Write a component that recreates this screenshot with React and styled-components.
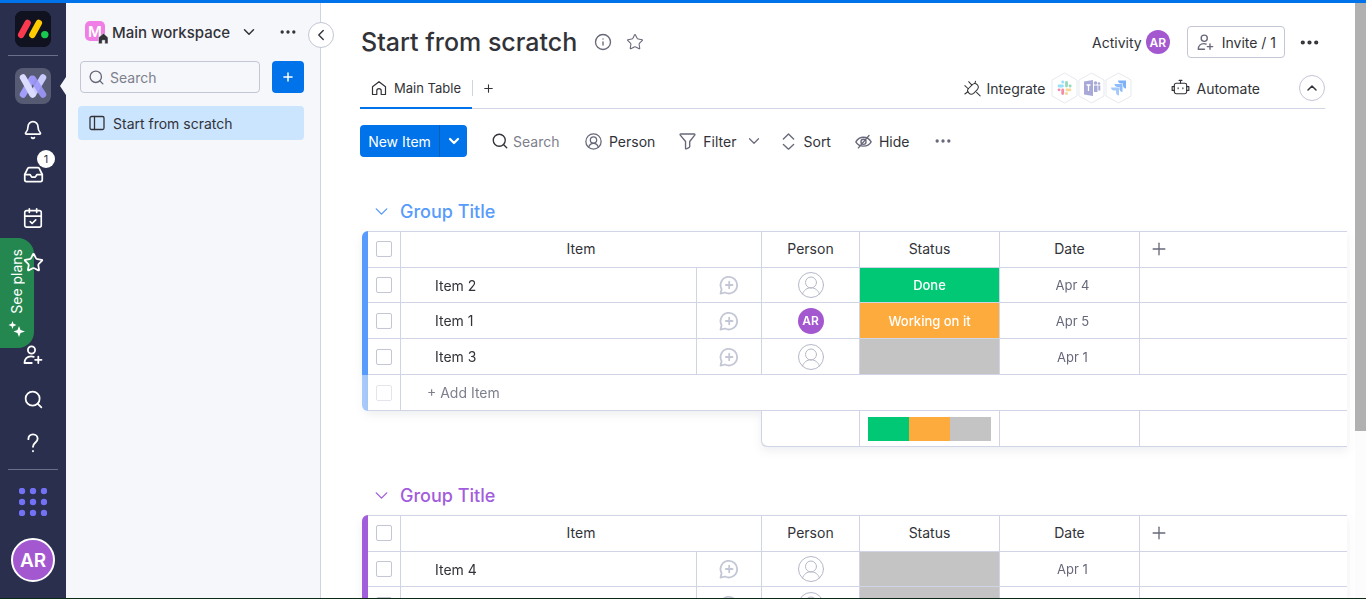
import React from 'react';
import styled, { createGlobalStyle, css } from 'styled-components';
import {
    Bell, CalendarCheck, ChevronDown, ChevronLeft, ChevronUp, Ellipsis,
    Inbox, Info, Plus, Search, Star
} from 'lucide-react';

const GlobalStyle = createGlobalStyle`
    * {
        box-sizing: border-box;
    }
    body {
        margin: 0;
        background-color: #fff;
        color: #323338;
        font-family: 'Inter', 'Liberation Sans', sans-serif;
        font-size: 14px;
    }
    button, input {
        font: inherit;
        color: inherit;
    }
    svg {
        display: block;
        flex-shrink: 0;
    }
`;

const Page = styled.div`
    display: flex;
    height: 100vh;
    overflow: hidden;
    border-top: 3px solid #0073ea;
    border-bottom: 1px solid #0c2a16;
`;

const PlainButton = styled.button`
    display: flex;
    align-items: center;
    justify-content: center;
    padding: 0;
    border: none;
    background: none;
    cursor: pointer;
`;

/* ---- left rail ---- */

const Rail = styled.nav`
    position: relative;
    display: flex;
    flex-direction: column;
    justify-content: space-between;
    flex: 0 0 66px;
    padding: 8px 0 16px;
    background-color: #292f4c;
    color: #fff;
`;

const RailGroup = styled.div`
    display: flex;
    flex-direction: column;
    align-items: center;
`;

const RailTile = styled(PlainButton)`
    width: 36px;
    height: 36px;
    border-radius: 8px;
    background-color: ${props => props.$color};
`;

const RailDivider = styled.hr`
    width: 50px;
    height: 1px;
    margin: ${props => props.$margin};
    border: none;
    background-color: #6b6f87;
`;

const RailButton = styled(PlainButton)`
    position: relative;
    z-index: 1;
    width: 44px;
    height: 44px;
`;

const RailIcons = styled.div`
    margin-top: 4px;
`;

const Badge = styled.span`
    position: absolute;
    top: -2px;
    right: 0;
    width: 18px;
    height: 18px;
    border-radius: 50%;
    background-color: #fff;
    color: #323338;
    font-size: 11px;
    line-height: 18px;
    text-align: center;
`;

const Notch = styled.span`
    position: absolute;
    top: 74px;
    right: 0;
    border: solid transparent;
    border-width: 9px 6px 9px 0;
    border-right-color: #f6f7fb;
`;

const SeePlans = styled(PlainButton)`
    position: absolute;
    left: 0;
    top: 235px;
    flex-direction: column;
    gap: 8px;
    width: 34px;
    height: 110px;
    border-radius: 0 16px 16px 0;
    background-color: #258750;
    color: #fff;
`;

const SeePlansText = styled.span`
    writing-mode: vertical-rl;
    transform: rotate(180deg);
    line-height: 18px;
`;

const Avatar = styled.span`
    display: inline-flex;
    align-items: center;
    justify-content: center;
    width: ${props => props.$size}px;
    height: ${props => props.$size}px;
    border-radius: 50%;
    background-color: #a358d0;
    color: #fff;
    font-size: ${props => props.$font || 12}px;
    font-weight: 600;
    ${props => props.$ring && css`
        border: 2px solid #fff;
    `}
`;

const AppsButton = styled(PlainButton)`
    margin-bottom: 22px;
`;

/* ---- workspace panel ---- */

const Panel = styled.aside`
    position: relative;
    flex: 0 0 255px;
    padding: 13px 16px 0 12px;
    border-right: 1px solid #d0d4e4;
    background-color: #f6f7fb;
`;

const PanelHeader = styled.div`
    display: flex;
    align-items: center;
    height: 32px;
    padding-left: 7px;
`;

const WorkspaceButton = styled(PlainButton)`
    flex: 1;
    gap: 4px;
    justify-content: flex-start;
    font-size: 15px;
    font-weight: 500;

    & > :last-child {
        margin-left: 6px;
    }
`;

const PanelMenu = styled(PlainButton)`
    width: 32px;
    height: 32px;
`;

const SearchRow = styled.div`
    display: flex;
    gap: 12px;
    margin: 13px 0 13px 2px;
`;

const SearchBox = styled.label`
    display: flex;
    flex: 1;
    align-items: center;
    gap: 5px;
    height: 32px;
    padding: 0 7px;
    border: 1px solid #c3c6d4;
    border-radius: 4px;
    color: #676879;
`;

const TextInput = styled.input`
    width: ${props => props.$width || '100%'};
    min-width: 0;
    padding: 0;
    border: none;
    outline: none;
    background: none;

    &::placeholder {
        color: #7d7f8c;
        opacity: 1;
    }
`;

const AddButton = styled(PlainButton)`
    width: 32px;
    height: 32px;
    border-radius: 4px;
    background-color: #0073ea;
    color: #fff;
`;

const BoardLink = styled.a`
    display: flex;
    align-items: center;
    gap: 8px;
    height: 34px;
    padding: 0 11px;
    border-radius: 4px;
    background-color: #cce5ff;
    color: #323338;
    text-decoration: none;
`;

const CollapseButton = styled(PlainButton)`
    position: absolute;
    top: 19px;
    right: -14px;
    width: 26px;
    height: 26px;
    border: 1px solid #c3c6d4;
    border-radius: 50%;
    background-color: #fff;
`;

/* ---- board ---- */

const Board = styled.main`
    flex: 1;
    min-width: 0;
    padding: 23px 8px 0 39px;
    overflow: hidden;
`;

const BoardHeader = styled.header`
    display: flex;
    align-items: center;
    height: 32px;
    margin-right: 22px;
`;

const Title = styled.h1`
    margin: 0 17px 0 1px;
    font-size: 25px;
    font-weight: 500;
    line-height: 32px;
`;

const TitleIcon = styled(PlainButton)`
    margin-right: 14px;
    color: #676879;
`;

const HeaderActions = styled.div`
    display: flex;
    align-items: center;
    gap: 8px;
    margin-left: auto;
`;

const ActivityButton = styled(PlainButton)`
    gap: 4px;
    margin-right: 9px;
`;

const InviteButton = styled(PlainButton)`
    gap: 8px;
    height: 32px;
    padding: 0 8px 0 9px;
    border: 1px solid #c3c6d4;
    border-radius: 4px;

    & > svg {
        color: #676879;
    }
`;

const TabBar = styled.div`
    display: flex;
    align-items: center;
    height: 41px;
    margin: 10px 22px 0 0;
    border-bottom: 1px solid #d0d4e4;
`;

const Tab = styled(PlainButton)`
    align-self: stretch;
    gap: 7px;
    width: 112px;
    margin-bottom: -1px;
    border-bottom: 2px solid #0073ea;
    font-size: 13px;
`;

const AddTab = styled(PlainButton)`
    width: 32px;
    height: 16px;
    border-left: 1px solid #d0d4e4;
`;

const TabActions = styled.div`
    display: flex;
    align-items: center;
    gap: 39px;
    margin-left: auto;
`;

const TabAction = styled(PlainButton)`
    gap: 6px;
`;

const Hexagons = styled.span`
    display: flex;
`;

const RoundButton = styled(PlainButton)`
    width: 26px;
    height: 26px;
    border: 1px solid #c3c6d4;
    border-radius: 50%;
`;

const Toolbar = styled.div`
    display: flex;
    align-items: center;
    margin: 16px 0 42px;
`;

const SplitButton = styled.div`
    display: flex;
    height: 32px;
    margin-right: 24px;
    border-radius: 4px;
    background-color: #0073ea;
    color: #fff;
`;

const NewItem = styled(PlainButton)`
    width: 79px;
`;

const NewItemMenu = styled(PlainButton)`
    width: 28px;
    border-left: 1px solid #0060b9;
`;

const Tool = styled(PlainButton)`
    gap: 7px;
    margin-right: ${props => props.$after || 24}px;

    & > svg {
        color: #676879;
    }
`;

const ToolSearch = styled.label`
    display: flex;
    align-items: center;
    gap: 4px;
    margin-right: 20px;
`;

/* ---- groups ---- */

const Group = styled.section`
    margin-bottom: 36px;
`;

const GroupTitle = styled.h2`
    display: flex;
    align-items: center;
    gap: 8px;
    height: 24px;
    margin: 0 0 8px 11px;
    color: ${props => props.$color};
    font-size: 18px;
    font-weight: 500;
`;

const Table = styled.table`
    width: calc(100% - 2px);
    margin-left: 2px;
    border-spacing: 0;
    table-layout: fixed;
    filter: drop-shadow(0 4px 4px rgba(41, 47, 76, 0.08));
`;

const Column = styled.col`
    width: ${props => props.$width};
`;

const cell = css`
    height: 36px;
    padding: 0;
    border-right: 1px solid #d0d4e4;
    border-bottom: 1px solid #d0d4e4;
    background-color: #fff;
    font-weight: 400;
    text-align: center;
    vertical-align: middle;

    &:last-child {
        border-right: none;
    }
`;

const HeadCell = styled.th`
    ${cell}
    height: 37px;
    padding-bottom: 2px;
    border-top: 1px solid #d0d4e4;
    color: #323338;
`;

const AddColumn = styled(HeadCell)`
    padding-left: 9px;
`;

const Cell = styled.td`
    ${cell}
`;

const Row = styled.tr`
    &:first-child > td {
        height: 35px;
    }
`;

const ColorBar = styled.td`
    padding: 0;
    background-color: ${props => props.$color};
    opacity: ${props => props.$faded ? 0.5 : 1};
    border-radius: ${props => props.$radius || 0};
`;

const NameCell = styled(Cell)`
    padding-left: 34px;
    text-align: left;
`;

const StatusCell = styled(Cell)`
    background-color: ${props => props.$color};
    color: #fff;
    font-size: 13px;
    font-weight: 500;
`;

const DateCell = styled(Cell)`
    padding-left: 6px;
    color: #676879;
    font-size: 13px;
`;

const AddCell = styled(Cell)`
    padding-left: 26px;
    text-align: left;
`;

const SummaryCell = styled(Cell)`
    padding: 0 8px;
    ${props => props.$first && css`
        border-bottom-left-radius: 6px;
        box-shadow: -1px 0 0 #d0d4e4;
    `}
`;

const Battery = styled.div`
    display: flex;
    height: 24px;
`;

const BatteryPart = styled.span`
    flex: 1;
    background-color: ${props => props.$color};
`;

const Checkbox = styled.input`
    display: block;
    width: 16px;
    height: 16px;
    margin: 0 8px;
    appearance: none;
    border: 1px solid #c3c6d4;
    border-radius: 2px;
    background-color: #fff;

    &:disabled {
        opacity: 0.45;
    }
`;

const CellButton = styled(PlainButton)`
    margin: 0 auto;
`;

const AddColumnButton = styled(PlainButton)`
    color: #676879;
`;

const Scrollbar = styled.div`
    flex: 0 0 11px;
    background-color: #fcfcfc;
`;

const ScrollThumb = styled.div`
    height: 72%;
    background-color: #b1b1b1;
`;

/* ---- icons ---- */

const Icon = ({ size = 16, box = 20, width = 1.5, children }) => (
    <svg width={size} height={size} viewBox={`0 0 ${box} ${box}`} fill="none" stroke="currentColor"
        strokeWidth={width} strokeLinecap="round" strokeLinejoin="round" aria-hidden="true">
        {children}
    </svg>
);

const LogoIcon = () => (
    <svg width="36" height="36" viewBox="0 0 36 36" strokeLinecap="round" strokeWidth="6.5" aria-hidden="true">
        <rect width="36" height="36" rx="8" fill="#10121f" />
        <path d="M6.2 23.8 12.600 12" stroke="#fb3a50" />
        <path d="M17.400 23.800 23.800 12" stroke="#ffcc00" />
        <circle cx="29.800" cy="23.600" r="3.700" fill="#19c94f" />
    </svg>
);

const WorkIcon = () => (
    <svg width="30" height="26" viewBox="0 0 30 26" fill="none" strokeLinecap="round" strokeLinejoin="round" strokeWidth="6.500" aria-hidden="true">
        <path d="M5 21.500 14 6" stroke="#a29df8" />
        <path d="M25 4.500 15 21" stroke="#c9c9fb" />
        <path d="M5 4.500 14.500 21.500" stroke="#dadbfd" />
        <path d="M15 6 25 21.500" stroke="#9d97fa" strokeOpacity="0.9" />
    </svg>
);

const InviteIcon = ({ size = 20, width = 1.5 }) => (
    <Icon size={size} width={width}>
        <circle cx="8.500" cy="5" r="3.600" />
        <path d="M8.800 18H1.500c0-4.200 2.600-6.700 6.500-6.700 1 0 2 .2 2.800.5" />
        <path d="M15.300 11.600v6.400M12.100 14.800h6.400" />
    </Icon>
);

const PersonIcon = () => (
    <Icon size={17} width={1.5}>
        <circle cx="10" cy="10" r="9" />
        <circle cx="10" cy="8.300" r="3.700" />
        <path d="M4.300 16.800c.8-3 3-4.700 5.700-4.700s4.900 1.700 5.700 4.700" />
    </Icon>
);

const EmptyPersonIcon = () => (
    <Icon size={26} box={26} width={1}>
        <g stroke="#b4b7c6">
            <circle cx="13" cy="13" r="12.500" />
            <circle cx="13" cy="10.500" r="5.500" />
            <path d="M4.500 22c1.500-4 4.500-6.200 8.500-6.200s7 2.200 8.500 6.200" />
        </g>
    </Icon>
);

const ChatIcon = () => (
    <Icon size={20} width={1.8}>
        <g stroke="#c3c6d4">
            <path d="M2.600 14.200A8.300 8.300 0 1 1 6 17.500L1.500 18.600z" />
            <path d="M10.200 6.700v6.600M6.900 10h6.600" />
        </g>
    </Icon>
);

const BoardIcon = () => (
    <Icon size={16} box={16} width={1.3}>
        <rect x="1" y="1.500" width="14" height="13" rx="1.500" />
        <path d="M5.500 1.500v13" />
    </Icon>
);

const HomeIcon = () => (
    <Icon size={16} box={16} width={1.2}>
        <path d="M1.500 6.800 8 1.700l6.500 5.100v7.700h-4.300v-3.700a2.200 2.200 0 0 0-4.400 0v3.700H1.500z" />
    </Icon>
);

const WorkspaceIcon = () => (
    <svg width="23" height="24" viewBox="0 0 23 24" aria-hidden="true">
        <rect y="1" width="20" height="20" rx="5" fill="#f07ee6" />
        <text x="10" y="16.500" textAnchor="middle" fontSize="15" fontWeight="600" fill="#fff">M</text>
        <path d="M13.500 17.500 18.500 13.300l4.500 4.200v6.200h-3.200v-3.400h-2.600v3.400h-3.700z" fill="#323338" stroke="#f6f7fb" strokeWidth=".5" />
    </svg>
);

const FilterIcon = () => (
    <Icon size={17} width={1.600}>
        <path d="M1.500 2.500c-.5-.7-.2-1.300.6-1.300h15.800c.8 0 1.100.6.600 1.300L12.600 10v6.200c0 .8-3.800 3-4.900 2.300V10z" />
    </Icon>
);

const SortIcon = () => (
    <Icon size={17} width={1.600}>
        <path d="M4 7 10 1.200 16 7M4 13.500 10 19l6-5.500" />
    </Icon>
);

const HideIcon = () => (
    <Icon size={17} width={1.600}>
        <path d="M1 10.500C3 7 6 5 10 5s7 2 9 5.500C17 14 14 15.500 10 15.500s-7-1.500-9-5z" />
        <circle cx="10" cy="10.300" r="3" />
        <path d="M4 17.500 16.500 3" />
    </Icon>
);

/* plug with two prongs, rotated to the upper left, cord to the lower right */
const PlugIcon = () => (
    <Icon size={17} width={1.200}>
        <path d="M1 6.500 5 10.300M5.500 2 9.300 6M5 10.300 9.300 6c2-2 4.400-2.300 6.200-.5s1.700 4.200-.4 6.300l-3.800 4C9.500 17.200 7.200 17 5.500 15.200s-2-3.200-.5-4.900z" />
        <path d="M14.800 14.500 19 18.800M1 16.500l3.500-2.700M13.500 1.500l-.8 2.700" />
    </Icon>
);

const RobotIcon = () => (
    <Icon size={19} width={1.200}>
        <rect x="3.500" y="4.500" width="13" height="11" rx="2" />
        <path d="M10 4.500V1.800M8.500 1.500h3M3.500 8H1.200v4h2.300M16.500 8h2.300v4h-2.300M7.500 9.300v1M12.500 9.300v1" />
    </Icon>
);

const SparkleIcon = () => (
    <svg width="18" height="16" viewBox="0 0 18 16" fill="#fff" aria-hidden="true">
        <path d="M11 5l1.500 4L17 10.500 12.500 12 11 16l-1.500-4L5.500 10.500 9.500 9z" />
        <path d="M4.500 0l1 2.700L8.500 4l-3 1.200-1 2.800-1-2.800L.5 4l3-1.300z" />
    </svg>
);

const AppsIcon = () => (
    <svg width="28" height="28" viewBox="0 0 28 28" fill="#7371f5" aria-hidden="true">
        {[3, 14, 25].map(y => [3, 14, 25].map(x => <circle key={`${x}-${y}`} cx={x} cy={y} r="3.200" />))}
    </svg>
);

const Hexagon = ({ children }) => (
    <svg width="27" height="32" viewBox="0 0 27 32" fill="none" aria-hidden="true">
        <path d="M13.500 1 26 8v16l-12.500 7L1 24V8z" stroke="#e6e9ef" strokeLinejoin="round" />
        {children}
    </svg>
);

const SlackMark = () => (
    <Hexagon>
        <g strokeWidth="2.800" strokeLinecap="round" opacity=".5">
            <path d="M11.700 10v.2M8 14h3.500" stroke="#36c5f0" />
            <path d="M15.500 10.300V14M19 14h.2" stroke="#2eb67d" />
            <path d="M15.500 21.500v.2M15.800 17.800H19" stroke="#ecb22e" />
            <path d="M11.700 18v3.500M8 17.800h.2" stroke="#e01e5a" />
        </g>
    </Hexagon>
);

const TeamsMark = () => (
    <Hexagon>
        <g fill="#a9a9d8">
            <path d="M6 9.500 15 8v16l-9-1.500z" />
            <circle cx="17.500" cy="11" r="1.800" />
            <circle cx="21" cy="11.500" r="1.300" />
            <path d="M16 13.500h3.500v6.500H16zM20.300 13.500h2v5h-2z" />
        </g>
        <path d="M8.500 13h4M10.500 13v6" stroke="#fff" strokeWidth="1.300" />
    </Hexagon>
);

const JiraMark = () => (
    <Hexagon>
        <path d="M13 8.500h8v8c-2 0-3-1.500-3-3v-2h-2c-1.500 0-3-1-3-3z" fill="#7db2f8" />
        <path d="M9.500 12h8v8c-2 0-3-1.500-3-3v-2h-2c-1.500 0-3-1-3-3z" fill="#8fbdf9" />
        <path d="M6 15.500h8v8c-2 0-3-1.500-3-3v-2H9c-1.500 0-3-1-3-3z" fill="#a5cafa" />
    </Hexagon>
);

/* ---- data ---- */

const GREEN = '#00c875';
const ORANGE = '#fdab3d';
const GREY = '#c4c4c4';

const groups = [
    {
        id: 'first',
        color: '#579bfc',
        items: [
            { id: 2, name: 'Item 2', status: 'Done', color: GREEN, date: 'Apr 4' },
            { id: 1, name: 'Item 1', owner: 'AR', status: 'Working on it', color: ORANGE, date: 'Apr 5' },
            { id: 3, name: 'Item 3', status: '', color: GREY, date: 'Apr 1' },
        ],
    },
    {
        id: 'second',
        color: '#a25ddc',
        items: [
            { id: 4, name: 'Item 4', status: '', color: GREY, date: 'Apr 1' },
            { id: 5, name: '', status: '', color: GREY, date: '' },
        ],
    },
];

const BoardGroup = ({ group }) => (
    <Group>
        <GroupTitle $color={group.color}>
            <ChevronDown size={21} strokeWidth={1.6} />
            Group Title
        </GroupTitle>
        <Table>
            <colgroup>
                <Column $width="6px" />
                <Column $width="33px" />
                <Column $width="296px" />
                <Column $width="65px" />
                <Column $width="98px" />
                <Column $width="140px" />
                <Column $width="140px" />
                <Column $width="auto" />
            </colgroup>
            <thead>
                <tr>
                    <ColorBar $color={group.color} $radius="6px 0 0 0" />
                    <HeadCell><Checkbox type="checkbox" aria-label="Select all items" /></HeadCell>
                    <HeadCell colSpan={2}>Item</HeadCell>
                    <HeadCell>Person</HeadCell>
                    <HeadCell>Status</HeadCell>
                    <HeadCell>Date</HeadCell>
                    <AddColumn>
                        <AddColumnButton aria-label="Add column"><Plus size={20} strokeWidth={1.6} /></AddColumnButton>
                    </AddColumn>
                </tr>
            </thead>
            <tbody>
                {group.items.map(item => (
                    <Row key={item.id}>
                        <ColorBar $color={group.color} />
                        <Cell><Checkbox type="checkbox" aria-label={`Select ${item.name}`} /></Cell>
                        <NameCell>{item.name}</NameCell>
                        <Cell><CellButton aria-label="Start conversation"><ChatIcon /></CellButton></Cell>
                        <Cell>
                            <CellButton aria-label="Person">
                                {item.owner ? <Avatar $size={26}>{item.owner}</Avatar> : <EmptyPersonIcon />}
                            </CellButton>
                        </Cell>
                        <StatusCell $color={item.color}>{item.status}</StatusCell>
                        <DateCell>{item.date}</DateCell>
                        <Cell />
                    </Row>
                ))}
                <tr>
                    <ColorBar $color={group.color} $faded $radius="0 0 0 6px" />
                    <Cell><Checkbox type="checkbox" disabled aria-label="New item" /></Cell>
                    <AddCell colSpan={6}>
                        <TextInput placeholder="+ Add Item" aria-label="Add item" />
                    </AddCell>
                </tr>
            </tbody>
            <tfoot>
                <tr>
                    <td colSpan={3} />
                    <td />
                    <SummaryCell $first />
                    <SummaryCell>
                        <Battery>
                            {group.items.map(item => <BatteryPart key={item.id} $color={item.color} />)}
                        </Battery>
                    </SummaryCell>
                    <SummaryCell />
                    <SummaryCell />
                </tr>
            </tfoot>
        </Table>
    </Group>
);

const SideRail = () => (
    <Rail>
        <RailGroup>
            <RailTile $color="#10121f" aria-label="Home"><LogoIcon /></RailTile>
            <RailDivider $margin="8px 0 12px" />
            <RailTile $color="#565b73" aria-label="Work management"><WorkIcon /></RailTile>
            <RailIcons>
                <RailButton aria-label="Notifications"><Bell size={20} strokeWidth={2} /></RailButton>
                <RailButton aria-label="Inbox">
                    <Inbox size={21} strokeWidth={2} />
                    <Badge>1</Badge>
                </RailButton>
                <RailButton aria-label="My work"><CalendarCheck size={22} strokeWidth={1.8} /></RailButton>
                <RailButton aria-label="Favorites"><Star size={21} strokeWidth={2} /></RailButton>
            </RailIcons>
        </RailGroup>
        <SeePlans>
            <SeePlansText>See plans</SeePlansText>
            <SparkleIcon />
        </SeePlans>
        <RailGroup>
            <RailButton aria-label="Invite members"><InviteIcon size={20} width={1.8} /></RailButton>
            <RailButton aria-label="Search"><Search size={21} strokeWidth={2} /></RailButton>
            <RailButton aria-label="Help">
                <Icon size={22} width={1.7}>
                    <path d="M5.800 6.500C5.800 4 7.500 2.200 10 2.200s4.200 1.700 4.200 4c0 3.400-4.200 3.300-4.200 7.200M10 17.300v.3" />
                </Icon>
            </RailButton>
            <RailDivider $margin="4px 0 18px" />
            <AppsButton aria-label="Products"><AppsIcon /></AppsButton>
            <PlainButton aria-label="Profile"><Avatar $size={44} $font={19} $ring>AR</Avatar></PlainButton>
        </RailGroup>
        <Notch />
    </Rail>
);

const WorkspacePanel = () => (
    <Panel>
        <PanelHeader>
            <WorkspaceButton>
                <WorkspaceIcon />
                Main workspace
                <ChevronDown size={18} strokeWidth={2} />
            </WorkspaceButton>
            <PanelMenu aria-label="Workspace options"><Ellipsis size={20} strokeWidth={2} /></PanelMenu>
        </PanelHeader>
        <SearchRow>
            <SearchBox>
                <Search size={17} strokeWidth={1.9} />
                <TextInput placeholder="Search" aria-label="Search workspace" />
            </SearchBox>
            <AddButton aria-label="Add to workspace"><Plus size={14} strokeWidth={2.6} /></AddButton>
        </SearchRow>
        <BoardLink href="#board">
            <BoardIcon />
            Start from scratch
        </BoardLink>
        <CollapseButton aria-label="Collapse panel"><ChevronLeft size={18} strokeWidth={1.8} /></CollapseButton>
    </Panel>
);

class App extends React.Component {
    render() {
        return (
            <React.Fragment>
                <GlobalStyle />
                <Page>
                    <SideRail />
                    <WorkspacePanel />
                    <Board>
                        <BoardHeader>
                            <Title>Start from scratch</Title>
                            <TitleIcon aria-label="Board info"><Info size={18} strokeWidth={1.8} /></TitleIcon>
                            <TitleIcon aria-label="Add to favorites"><Star size={18} strokeWidth={1.4} /></TitleIcon>
                            <HeaderActions>
                                <ActivityButton>
                                    Activity
                                    <Avatar $size={24} $font={12}>AR</Avatar>
                                </ActivityButton>
                                <InviteButton>
                                    <InviteIcon size={17} width={1.6} />
                                    Invite / 1
                                </InviteButton>
                                <PanelMenu aria-label="Board options"><Ellipsis size={23} strokeWidth={2.4} /></PanelMenu>
                            </HeaderActions>
                        </BoardHeader>
                        <TabBar>
                            <Tab><HomeIcon />Main Table</Tab>
                            <AddTab aria-label="Add view"><Plus size={13} strokeWidth={2} /></AddTab>
                            <TabActions>
                                <TabAction>
                                    <PlugIcon />
                                    Integrate
                                    <Hexagons>
                                        <SlackMark />
                                        <TeamsMark />
                                        <JiraMark />
                                    </Hexagons>
                                </TabAction>
                                <TabAction>
                                    <RobotIcon />
                                    Automate
                                </TabAction>
                                <RoundButton aria-label="Collapse header"><ChevronUp size={16} strokeWidth={2.2} /></RoundButton>
                            </TabActions>
                        </TabBar>
                        <Toolbar>
                            <SplitButton>
                                <NewItem>New Item</NewItem>
                                <NewItemMenu aria-label="More ways to add"><ChevronDown size={16} strokeWidth={3.4} /></NewItemMenu>
                            </SplitButton>
                            <ToolSearch>
                                <Search size={18} strokeWidth={1.8} />
                                <TextInput $width="52px" placeholder="Search" aria-label="Search board" />
                            </ToolSearch>
                            <Tool><PersonIcon />Person</Tool>
                            <Tool $after={8}><FilterIcon />Filter</Tool>
                            <Tool $after={17} aria-label="Filter options"><ChevronDown size={18} strokeWidth={1.6} /></Tool>
                            <Tool><SortIcon />Sort</Tool>
                            <Tool><HideIcon />Hide</Tool>
                            <Tool aria-label="More tools"><Ellipsis size={20} strokeWidth={2} /></Tool>
                        </Toolbar>
                        {groups.map(group => <BoardGroup key={group.id} group={group} />)}
                    </Board>
                    <Scrollbar>
                        <ScrollThumb />
                    </Scrollbar>
                </Page>
            </React.Fragment>
        );
    }
}

export default App;
